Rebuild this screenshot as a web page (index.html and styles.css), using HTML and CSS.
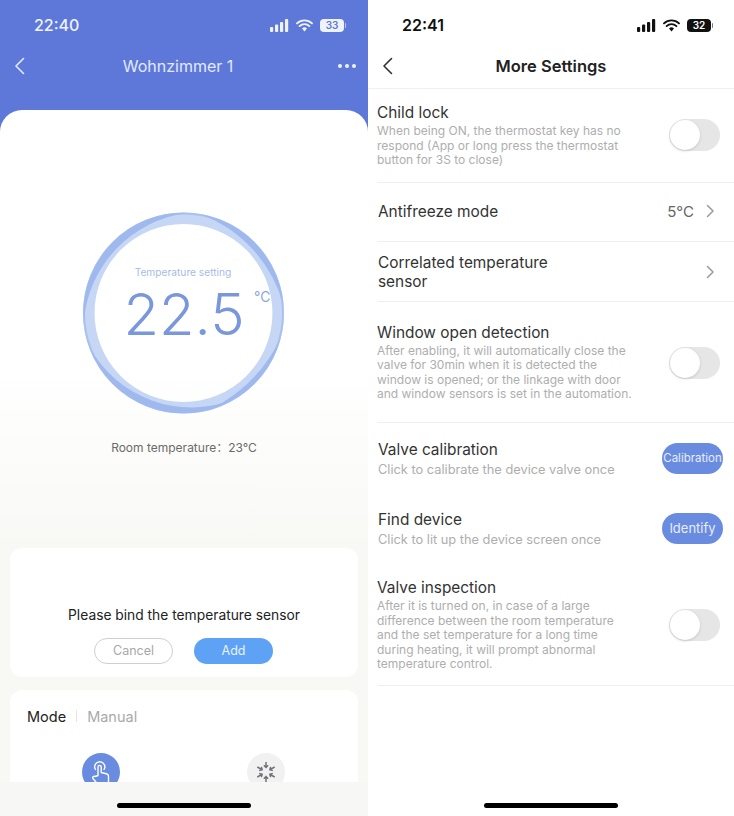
FILE: index.html
```html
<!DOCTYPE html>
<html lang="en">
<head>
  <meta charset="UTF-8" />
  <title>Thermostat Settings</title>
  <link rel="stylesheet" href="styles.css">
</head>
<body>
  <div class="screens">

    <section class="screen screen-left">
      <div class="status status-light">
        <span class="time">22:40</span>
        <div class="status-icons">
          <svg class="signal" width="19" height="13" viewBox="0 0 19 13"><rect x="0" y="8" width="3.2" height="5" rx="1"/><rect x="5" y="5.5" width="3.2" height="7.5" rx="1"/><rect x="10" y="3" width="3.2" height="10" rx="1"/><rect x="15" y="0" width="3.2" height="13" rx="1"/></svg>
          <svg class="wifi" width="17" height="13" viewBox="0 0 17 13"><path d="M1 4.4a10.8 10.8 0 0 1 15 0M3.6 7.1a7 7 0 0 1 9.8 0" fill="none" stroke="currentColor" stroke-width="1.9" stroke-linecap="round"/><path d="M6 9.6a3.5 3.5 0 0 1 5 0L8.5 12.6z" fill="currentColor"/></svg>
          <span class="battery">33</span>
        </div>
      </div>
      <header class="nav nav-blue">
        <svg class="back" width="11" height="18" viewBox="0 0 11 18"><path d="M9.5 1.5 2 9l7.5 7.5" fill="none" stroke="currentColor" stroke-width="1.6" stroke-linecap="round" stroke-linejoin="round"/></svg>
        <h1 class="nav-title">Wohnzimmer 1</h1>
        <div class="dots"><i></i><i></i><i></i></div>
      </header>

      <div class="sheet">
        <div class="dial">
          <svg class="ring" width="202" height="202" viewBox="0 0 202 202">
            <circle cx="100.5" cy="101" r="94.7" fill="none" stroke="#c6d6f5" stroke-width="11.5"/>
            <circle cx="100.5" cy="101" r="99.5" fill="none" stroke="#a9c1f0" stroke-width="2"/>
            <g fill="#9fb9ee">
              <path d="M.9 109.7A100 100 0 0 1 104 1.100A118.400 118.400 0 0 0 .9 109.700Z"/>
              <path d="M117.900 2.500A100 100 0 0 1 200.100 92.300A133.500 133.500 0 0 0 117.900 2.500Z"/>
              <path d="M197.100 126.900A100 100 0 0 1 126.400 197.600A153 153 0 0 0 197.100 126.900Z"/>
              <path d="M150.500 187.600A100 100 0 0 1 6.500 135.200A116.600 116.600 0 0 0 150.500 187.600Z"/>
            </g>
          </svg>
          <div class="dial-label">Temperature setting</div>
          <div class="dial-value">22.5</div>
          <div class="dial-unit">°C</div>
        </div>
        <p class="room">Room temperature：23°C</p>

        <div class="card bind">
          <p class="bind-text">Please bind the temperature sensor</p>
          <div class="bind-actions">
            <span class="pill pill-cancel">Cancel</span>
            <span class="pill pill-add">Add</span>
          </div>
        </div>

        <div class="card mode">
          <div class="mode-head">
            <span class="mode-title">Mode</span>
            <span class="mode-sep"></span>
            <span class="mode-value">Manual</span>
          </div>
          <div class="mode-icons">
            <div class="round round-blue">
              <svg width="26" height="30" viewBox="0 -1.500 26 30"><path d="M7.500 11a5 5 0 1 1 8.500 0" fill="none" stroke="#fff" stroke-width="1.400" stroke-linecap="round"/><path d="M10 17V8.500a1.600 1.600 0 0 1 3.200 0V14l5 1.200c1.400.4 2.300 1.400 2.300 3V26H10l-5-6c-1-1.300.7-3 2.200-2z" fill="none" stroke="#fff" stroke-width="1.400" stroke-linejoin="round"/></svg>
            </div>
            <div class="round round-grey">
              <svg width="20" height="20" viewBox="0 0 20 20"><g fill="none" stroke="#6f7175" stroke-width="1.500" stroke-linecap="round" stroke-linejoin="round"><path d="M10 .5V5.400M8.300 3.800 10 5.600 11.700 3.800"/><path transform="rotate(60 10 10)" d="M10 .5V5.400M8.300 3.800 10 5.600 11.700 3.800"/><path transform="rotate(120 10 10)" d="M10 .5V5.400M8.300 3.800 10 5.600 11.700 3.800"/><path transform="rotate(180 10 10)" d="M10 .5V5.400M8.300 3.800 10 5.600 11.700 3.800"/><path transform="rotate(240 10 10)" d="M10 .5V5.400M8.300 3.800 10 5.600 11.700 3.800"/><path transform="rotate(300 10 10)" d="M10 .5V5.400M8.300 3.800 10 5.600 11.700 3.800"/></g></svg>
            </div>
          </div>
        </div>
      </div>

      <div class="home-area"><span class="home-bar"></span></div>
    </section>

    <section class="screen screen-right">
      <div class="status status-dark">
        <span class="time">22:41</span>
        <div class="status-icons">
          <svg class="signal" width="19" height="13" viewBox="0 0 19 13"><rect x="0" y="8" width="3.2" height="5" rx="1"/><rect x="5" y="5.5" width="3.2" height="7.5" rx="1"/><rect x="10" y="3" width="3.2" height="10" rx="1"/><rect x="15" y="0" width="3.2" height="13" rx="1"/></svg>
          <svg class="wifi" width="17" height="13" viewBox="0 0 17 13"><path d="M1 4.4a10.8 10.8 0 0 1 15 0M3.6 7.1a7 7 0 0 1 9.8 0" fill="none" stroke="currentColor" stroke-width="1.9" stroke-linecap="round"/><path d="M6 9.6a3.5 3.5 0 0 1 5 0L8.5 12.6z" fill="currentColor"/></svg>
          <span class="battery">32</span>
        </div>
      </div>
      <header class="nav nav-white">
        <svg class="back" width="11" height="18" viewBox="0 0 11 18"><path d="M9.5 1.500 2 9l7.500 7.500" fill="none" stroke="currentColor" stroke-width="1.600" stroke-linecap="round" stroke-linejoin="round"/></svg>
        <h1 class="nav-title">More Settings</h1>
      </header>

      <div class="rows">
        <div class="row row-child">
          <div class="row-text">
            <div class="row-title">Child lock</div>
            <div class="row-desc">When being ON, the thermostat key has no<br>respond (App or long press the thermostat<br>button for 3S to close)</div>
          </div>
          <span class="toggle toggle-up"></span>
        </div>
        <div class="row row-single">
          <div class="row-title row-title-big">Antifreeze mode</div>
          <div class="row-end"><span class="row-value">5°C</span><svg class="chev" width="9" height="14" viewBox="0 0 9 14"><path d="M1.500 1.500 7 7l-5.500 5.500" fill="none" stroke="#9a9a9a" stroke-width="1.500" stroke-linecap="round" stroke-linejoin="round"/></svg></div>
        </div>
        <div class="row row-double">
          <div class="row-title row-title-big">Correlated temperature<br>sensor</div>
          <div class="row-end"><svg class="chev" width="9" height="14" viewBox="0 0 9 14"><path d="M1.500 1.500 7 7l-5.500 5.500" fill="none" stroke="#9a9a9a" stroke-width="1.500" stroke-linecap="round" stroke-linejoin="round"/></svg></div>
        </div>
        <div class="row row-window">
          <div class="row-text">
            <div class="row-title">Window open detection</div>
            <div class="row-desc">After enabling, it will automatically close the<br>valve for 30min when it is detected the<br>window is opened; or the linkage with door<br>and window sensors is set in the automation.</div>
          </div>
          <span class="toggle toggle-down"></span>
        </div>
        <div class="row row-action row-plain">
          <div class="row-text">
            <div class="row-title">Valve calibration</div>
            <div class="row-desc row-desc-big">Click to calibrate the device valve once</div>
          </div>
          <span class="action action-tight">Calibration</span>
        </div>
        <div class="row row-action row-plain">
          <div class="row-text">
            <div class="row-title">Find device</div>
            <div class="row-desc row-desc-big">Click to lit up the device screen once</div>
          </div>
          <span class="action">Identify</span>
        </div>
        <div class="row row-inspect">
          <div class="row-text">
            <div class="row-title">Valve inspection</div>
            <div class="row-desc">After it is turned on, in case of a large<br>difference between the room temperature<br>and the set temperature for a long time<br>during heating, it will prompt abnormal<br>temperature control.</div>
          </div>
          <span class="toggle toggle-down"></span>
        </div>
      </div>

      <div class="home-area home-area-white"><span class="home-bar"></span></div>
    </section>

  </div>
</body>
</html>
```

FILE: styles.css
```css
* {
  box-sizing: border-box;
}

html, body {
  margin: 0;
  height: 816px;
  overflow: hidden;
}

body {
  font-family: 'Inter', 'Noto Sans CJK SC', 'Liberation Sans', sans-serif;
  color: #222;
  background: #fff;
}

p, h1 {
  margin: 0;
}

.screens {
  display: flex;
  height: 816px;
}

.screen {
  display: flex;
  flex-direction: column;
  height: 816px;
  overflow: hidden;
}

.screen-left {
  width: 368px;
  background: #5e78d9;
}

.screen-right {
  width: 366px;
  background: #fff;
}

/* status bar */
.status {
  display: flex;
  align-items: center;
  justify-content: space-between;
  height: 50px;
  padding: 0 24px 0 34px;
}

.status-light {
  color: #eef2fb;
}

.status-dark {
  padding-right: 23px;
  color: #111;
}

.time {
  font-size: 16px;
  font-weight: 600;
}

.status-light .time {
  font-weight: 500;
}

.status-icons {
  display: flex;
  align-items: center;
  gap: 7px;
}

.signal {
  fill: currentColor;
}

.battery {
  position: relative;
  width: 24px;
  height: 13px;
  border-radius: 4px;
  font-size: 10px;
  font-weight: 600;
  line-height: 13px;
  text-align: center;
}

.battery::after {
  content: "";
  position: absolute;
  right: -2px;
  top: 4px;
  width: 1.5px;
  height: 5px;
  border-radius: 0 1px 1px 0;
  background: currentColor;
}

.status-light .battery {
  background: #eef2fb;
  color: #5e78d9;
}

.status-light .battery::after {
  background: #b9c6ef;
}

.status-dark .battery {
  background: #111;
  color: #fff;
}

.status-dark .battery::after {
  background: #777;
}

/* nav */
.nav {
  display: flex;
  align-items: center;
  justify-content: center;
  position: relative;
}

.nav-blue {
  height: 60px;
  padding: 0 12px 28px 0;
  color: #e3e9fa;
}

.nav-white {
  height: 39px;
  padding-bottom: 6px;
  border-bottom: 1px solid #f0f0f0;
  color: #333;
}

.back {
  position: absolute;
  left: 14px;
  top: 7px;
}

.nav-title {
  font-size: 16px;
  font-weight: 400;
}

.nav-white .nav-title {
  font-size: 16.500px;
  font-weight: 600;
  color: #222;
}

.dots {
  position: absolute;
  right: 12px;
  top: 14px;
  display: flex;
  gap: 3px;
}

.dots i {
  width: 4px;
  height: 4px;
  border-radius: 50%;
  background: #eef2fb;
}

/* left sheet */
.sheet {
  flex: 1;
  min-height: 0;
  overflow: hidden;
  padding-top: 102px;
  border-radius: 22px 22px 0 0;
  background: linear-gradient(#fff 0, #fff 260px, #f8f8f5 440px);
}

.dial {
  position: relative;
  width: 202px;
  height: 202px;
  margin: 0 auto;
}

.ring {
  display: block;
}

.dial-label {
  position: absolute;
  top: 53px;
  left: -1px;
  right: 1px;
  font-size: 10.200px;
  line-height: 14px;
  text-align: center;
  color: #a9bbe6;
}

.dial-value {
  position: absolute;
  top: 66px;
  left: 0;
  right: 0;
  font-size: 58px;
  font-weight: 300;
  line-height: 72px;
  text-align: center;
  color: #7a97dc;
}

.dial-unit {
  position: absolute;
  top: 76px;
  left: 171px;
  font-size: 14px;
  line-height: 18px;
  color: #8ca5e2;
}

.room {
  margin-top: 26px;
  font-size: 12px;
  line-height: 16px;
  text-align: center;
  color: #6b6b6b;
}

.card {
  margin: 0 10px;
  border-radius: 12px;
  background: #fff;
}

.bind {
  height: 129px;
  margin-top: 92px;
  padding-top: 58px;
}

.bind-text {
  font-size: 13.800px;
  line-height: 18px;
  text-align: center;
  color: #222;
}

.bind-actions {
  display: flex;
  justify-content: center;
  gap: 21px;
  margin-top: 14px;
  padding-right: 1px;
}

.pill {
  width: 79px;
  height: 26px;
  border-radius: 13px;
  font-size: 12.500px;
  line-height: 26px;
  text-align: center;
}

.pill-cancel {
  border: 1px solid #cfcfcf;
  line-height: 24px;
  color: #a8a8a8;
}

.pill-add {
  background: #5ea2f5;
  color: #e8f1fe;
}

.mode {
  height: 110px;
  margin-top: 13px;
  padding: 17px 17px 0;
}

.mode-head {
  display: flex;
  align-items: center;
  height: 18px;
}

.mode-title {
  font-size: 14.500px;
  color: #222;
}

.mode-sep {
  width: 1px;
  height: 12px;
  margin: 0 10px;
  background: #e4e4e4;
}

.mode-value {
  font-size: 14.500px;
  color: #aaa;
}

.mode-icons {
  display: flex;
  gap: 127px;
  margin: 28px 0 0 55px;
}

.round {
  display: flex;
  align-items: center;
  justify-content: center;
  width: 38px;
  height: 38px;
  border-radius: 50%;
}

.round-blue {
  background: #6a8ce0;
}

.round-grey {
  background: #f1f1f1;
}

.home-area {
  display: flex;
  justify-content: center;
  flex: none;
  height: 34px;
  padding-top: 21px;
  background: #f7f7f5;
}

.home-area-white {
  background: #fff;
  margin-top: auto;
}

.home-bar {
  width: 134px;
  height: 5px;
  border-radius: 3px;
  background: #000;
}

/* settings rows */
.rows {
  padding-left: 9px;
}

.row {
  display: flex;
  align-items: center;
  justify-content: space-between;
  padding-right: 14px;
  border-bottom: 1px solid #efefef;
}

.row-plain {
  border-bottom: none;
}

.row-child {
  height: 94px;
}

.row-single {
  height: 59px;
  padding-bottom: 2px;
}

.row-double {
  height: 60px;
}

.row-window {
  height: 121px;
}

.row-action {
  height: 70px;
  padding-right: 11px;
}

.row-action .row-text {
  margin-top: 2px;
}

.row-action .row-title {
  padding-left: 1px;
}

.row-inspect {
  height: 123px;
}

.row-inspect .row-text {
  margin-top: 2px;
}

.row-title {
  margin-bottom: 1px;
  font-size: 15.400px;
  line-height: 20px;
  color: #333;
}

.row-title-big {
  margin-bottom: 0;
  padding-left: 1px;
  line-height: 19px;
}

.row-desc {
  font-size: 12px;
  line-height: 14.500px;
  color: #aeaeae;
}

.row-desc-big {
  font-size: 12.800px;
  line-height: 18px;
  padding-left: 1px;
}

.row-end {
  display: flex;
  align-items: center;
  gap: 12px;
  margin-right: 5px;
}

.row-value {
  font-size: 15px;
  color: #666;
}

.toggle {
  position: relative;
  flex: none;
  width: 51px;
  height: 32px;
  border-radius: 16px;
  background: #e6e6e6;
}

.toggle-up {
  margin-bottom: 2px;
}

.toggle-down {
  margin-top: 2px;
}

.toggle::after {
  content: "";
  position: absolute;
  left: 1px;
  top: 1px;
  width: 30px;
  height: 30px;
  border-radius: 50%;
  background: #fff;
  box-shadow: 0 1px 3px rgba(0, 0, 0, 0.15);
}

.action {
  flex: none;
  width: 61px;
  height: 31px;
  border-radius: 16px;
  background: #6a8ce0;
  font-size: 13px;
  line-height: 31px;
  text-align: center;
  color: #e6edfb;
}

.action-tight {
  font-size: 11.500px;
}
```
